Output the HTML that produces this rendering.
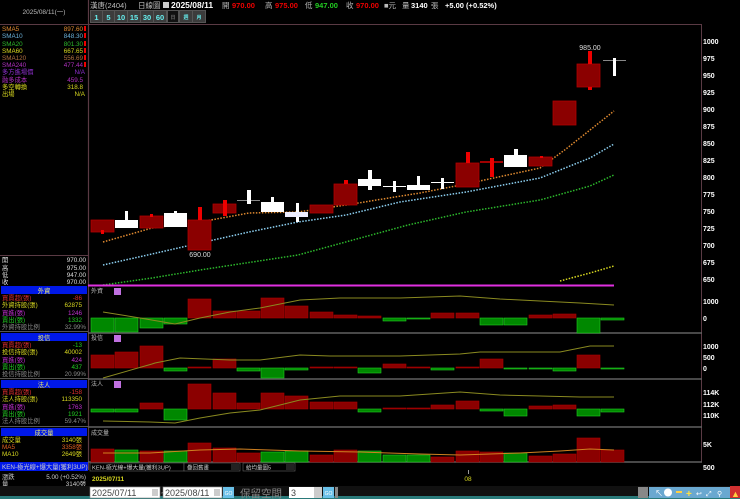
<!DOCTYPE html>
<html><head><meta charset="utf-8"><style>
body{margin:0;background:#000;width:740px;height:499px;overflow:hidden;font-family:"Liberation Sans","Noto Sans CJK TC",sans-serif}
svg{display:block}
text{font-family:"Liberation Sans","Noto Sans CJK TC",sans-serif}
</style></head><body>
<svg width="740" height="499" viewBox="0 0 740 499" xmlns="http://www.w3.org/2000/svg">
<rect width="740" height="499" fill="#000"/>
<g font-size="7.5">
<text x="90" y="8" fill="#bbb">漢唐(2404)</text>
<text x="138" y="8" fill="#bbb">日線圖</text>
<rect x="163" y="2" width="6" height="6" fill="#ccc"/>
<text x="171" y="8" fill="#fff" font-weight="bold" font-size="8.5">2025/08/11</text>
<text x="222" y="8" fill="#bbb">開</text><text x="232" y="8" fill="#e00" font-weight="bold">970.00</text>
<text x="265" y="8" fill="#bbb">高</text><text x="275" y="8" fill="#e00" font-weight="bold">975.00</text>
<text x="305" y="8" fill="#bbb">低</text><text x="315" y="8" fill="#2c2" font-weight="bold">947.00</text>
<text x="346" y="8" fill="#bbb">收</text><text x="356" y="8" fill="#e00" font-weight="bold">970.00</text>
<text x="384" y="8" fill="#bbb">■元</text>
<text x="402" y="8" fill="#bbb">量</text><text x="411" y="8" fill="#fff" font-weight="bold">3140</text><text x="431" y="8" fill="#bbb">張</text>
<text x="445" y="8" fill="#fff" font-weight="bold">+5.00 (+0.52%)</text>
</g>
<rect x="90" y="10" width="116" height="13" fill="#555"/>
<g font-size="7.5" fill="#6ee" text-anchor="middle" font-weight="bold">
<rect x="91" y="11" width="11" height="11" fill="#3c3c3c"/><text x="96.5" y="20">1</text>
<rect x="103" y="11" width="11" height="11" fill="#3c3c3c"/><text x="108.5" y="20">5</text>
<rect x="115" y="11" width="12" height="11" fill="#3c3c3c"/><text x="121" y="20">10</text>
<rect x="128" y="11" width="12" height="11" fill="#3c3c3c"/><text x="134" y="20">15</text>
<rect x="141" y="11" width="12" height="11" fill="#3c3c3c"/><text x="147" y="20">30</text>
<rect x="154" y="11" width="12" height="11" fill="#3c3c3c"/><text x="160" y="20">60</text>
<rect x="168" y="11" width="10" height="11" fill="#111"/><text x="173" y="19" font-size="5" fill="#666">日</text>
<rect x="180" y="11" width="12" height="11" fill="#3c3c3c"/><text x="186" y="19" font-size="5">週</text>
<rect x="193" y="11" width="12" height="11" fill="#3c3c3c"/><text x="199" y="19" font-size="5">月</text>
</g>
<text x="44" y="14" fill="#bbb" font-size="6.5" text-anchor="middle">2025/08/11(一)</text>
<line x1="0" y1="24.5" x2="701" y2="24.5" stroke="#5a3a44" stroke-width="1"/>
<line x1="88.5" y1="0" x2="88.5" y2="470" stroke="#5a3a44" stroke-width="1.2"/>
<line x1="701.5" y1="24" x2="701.5" y2="462" stroke="#5a3a44" stroke-width="1"/>
<g font-size="6.3">
<text x="2" y="31" fill="#e08a30">SMA5</text><text x="83" y="31" fill="#e08a30" text-anchor="end">897.60</text>
<text x="2" y="38" fill="#6ab0d8">SMA10</text><text x="83" y="38" fill="#6ab0d8" text-anchor="end">848.30</text>
<text x="2" y="46" fill="#2cb82c">SMA20</text><text x="83" y="46" fill="#2cb82c" text-anchor="end">801.30</text>
<text x="2" y="53" fill="#d8d820">SMA60</text><text x="83" y="53" fill="#d8d820" text-anchor="end">667.65</text>
<text x="2" y="60" fill="#b07040">SMA120</text><text x="83" y="60" fill="#b07040" text-anchor="end">556.69</text>
<text x="2" y="67" fill="#b030c0">SMA240</text><text x="83" y="67" fill="#b030c0" text-anchor="end">477.44</text>
<text x="2" y="74" fill="#9030d0">多方進場價</text><text x="85" y="74" fill="#9030d0" text-anchor="end">N/A</text>
<text x="2" y="82" fill="#b030c0">融多成本</text><text x="83" y="82" fill="#b030c0" text-anchor="end">459.5</text>
<text x="2" y="89" fill="#d8d820">多空轉換</text><text x="83" y="89" fill="#d8d820" text-anchor="end">318.8</text>
<text x="2" y="96" fill="#d8d820">出場</text><text x="85" y="96" fill="#d8d820" text-anchor="end">N/A</text>
</g>
<g fill="#e00"><rect x="84" y="26" width="2" height="5"/><rect x="84" y="33" width="2" height="5"/><rect x="84" y="41" width="2" height="5"/><rect x="84" y="48" width="2" height="5"/><rect x="84" y="55" width="2" height="5"/><rect x="84" y="62" width="2" height="5"/></g>
<line x1="0" y1="255.5" x2="88" y2="255.5" stroke="#5a3a44"/>
<g font-size="6.3" fill="#ddd">
<text x="2" y="262">開</text><text x="86" y="262" text-anchor="end">970.00</text>
<text x="2" y="270">高</text><text x="86" y="270" text-anchor="end">975.00</text>
<text x="2" y="277">低</text><text x="86" y="277" text-anchor="end">947.00</text>
<text x="2" y="284">收</text><text x="86" y="284" text-anchor="end">970.00</text>
</g>
<g font-size="6.3">
<rect x="1" y="286" width="86" height="8" fill="#0018e8"/><text x="44" y="293" fill="#ee6" text-anchor="middle">外資</text>
<text x="2" y="300" fill="#e03030">買賣超(張)</text><text x="82" y="300" fill="#e03030" text-anchor="end">-86</text>
<text x="2" y="307" fill="#d8d820">外資持股(張)</text><text x="82" y="307" fill="#d8d820" text-anchor="end">62875</text>
<text x="2" y="315" fill="#c030d0">買進(張)</text><text x="82" y="315" fill="#c030d0" text-anchor="end">1246</text>
<text x="2" y="322" fill="#2c2">賣出(張)</text><text x="82" y="322" fill="#2c2" text-anchor="end">1332</text>
<text x="2" y="329" fill="#888">外資持股比例</text><text x="86" y="329" fill="#888" text-anchor="end">32.99%</text>
<line x1="0" y1="331.5" x2="88" y2="331.5" stroke="#555"/>
<rect x="1" y="333" width="86" height="8" fill="#0018e8"/><text x="44" y="340" fill="#ee6" text-anchor="middle">投信</text>
<text x="2" y="347" fill="#e03030">買賣超(張)</text><text x="82" y="347" fill="#2c2" text-anchor="end">-13</text>
<text x="2" y="354" fill="#d8d820">投信持股(張)</text><text x="82" y="354" fill="#d8d820" text-anchor="end">40002</text>
<text x="2" y="362" fill="#c030d0">買進(張)</text><text x="82" y="362" fill="#c030d0" text-anchor="end">424</text>
<text x="2" y="369" fill="#2c2">賣出(張)</text><text x="82" y="369" fill="#2c2" text-anchor="end">437</text>
<text x="2" y="376" fill="#888">投信持股比例</text><text x="86" y="376" fill="#888" text-anchor="end">20.99%</text>
<line x1="0" y1="378.5" x2="88" y2="378.5" stroke="#555"/>
<rect x="1" y="380" width="86" height="8" fill="#0018e8"/><text x="44" y="387" fill="#ee6" text-anchor="middle">法人</text>
<text x="2" y="394" fill="#e03030">買賣超(張)</text><text x="82" y="394" fill="#e03030" text-anchor="end">-158</text>
<text x="2" y="401" fill="#d8d820">法人持股(張)</text><text x="82" y="401" fill="#d8d820" text-anchor="end">113350</text>
<text x="2" y="409" fill="#c030d0">買進(張)</text><text x="82" y="409" fill="#c030d0" text-anchor="end">1763</text>
<text x="2" y="416" fill="#2c2">賣出(張)</text><text x="82" y="416" fill="#2c2" text-anchor="end">1921</text>
<text x="2" y="423" fill="#888">法人持股比例</text><text x="86" y="423" fill="#888" text-anchor="end">59.47%</text>
<line x1="0" y1="426.5" x2="88" y2="426.5" stroke="#555"/>
<rect x="1" y="428" width="86" height="8" fill="#0018e8"/><text x="44" y="435" fill="#ee6" text-anchor="middle">成交量</text>
<text x="2" y="442" fill="#d8d820">成交量</text><text x="82" y="442" fill="#d8d820" text-anchor="end">3140張</text>
<text x="2" y="449" fill="#e06020">MA5</text><text x="82" y="449" fill="#e06020" text-anchor="end">3358張</text>
<text x="2" y="456" fill="#d8d820">MA10</text><text x="82" y="456" fill="#d8d820" text-anchor="end">2649張</text>
<rect x="0" y="462" width="88" height="9" fill="#0018e8"/><text x="2" y="469" fill="#ccc">KEN-極光線+爆大量(獲利3UP)</text>
<text x="2" y="479" fill="#ccc">漲跌</text><text x="86" y="479" fill="#ccc" text-anchor="end">5.00 (+0.52%)</text>
<text x="2" y="486" fill="#ccc">量</text><text x="86" y="486" fill="#ccc" text-anchor="end">3140張</text>
</g>
<g font-size="7" fill="#fff" font-weight="bold">
<text x="703" y="44">1000</text><text x="703" y="61">975</text><text x="703" y="78">950</text><text x="703" y="95">925</text><text x="703" y="112">900</text><text x="703" y="129">875</text><text x="703" y="146">850</text><text x="703" y="163">825</text><text x="703" y="180">800</text><text x="703" y="197">775</text><text x="703" y="214">750</text><text x="703" y="231">725</text><text x="703" y="248">700</text><text x="703" y="265">675</text><text x="703" y="282">650</text>
<text x="703" y="304">1000</text><text x="703" y="321">0</text>
<text x="703" y="349">1000</text><text x="703" y="360">500</text><text x="703" y="371">0</text>
<text x="703" y="395">114K</text><text x="703" y="407">112K</text><text x="703" y="418">110K</text>
<text x="703" y="447">5K</text><text x="703" y="470">500</text>
</g>
<g fill="none" stroke-width="1.5" stroke-dasharray="1.5 1.5">
<polyline stroke="#e08a30" points="103,242 152,228 200,222 249,213 298,212 346,205 395,197 420,193 466,184 540,168 566,149 590,130 614,111"/>
<polyline stroke="#8ccff0" points="103,265 152,254 200,243 249,232 298,222 346,215 400,202 466,192 540,178 590,158 614,144"/>
<polyline stroke="#2cb82c" points="103,285 152,278 200,270 298,255 408,225 466,212 540,200 590,186 614,175"/>
<polyline stroke="#d8d820" points="560,281 590,273 614,266"/>
</g>
<line x1="88" y1="285.5" x2="614" y2="285.5" stroke="#e030e0" stroke-width="2"/>
<g>
<rect x="91" y="220" width="23" height="12" fill="#8b0000" stroke="#b00000" stroke-width=".8"/><rect x="101" y="230" width="3" height="4" fill="#e00"/>
<rect x="125" y="211" width="3" height="10" fill="#fff"/><rect x="115" y="220" width="23" height="8" fill="#fff"/>
<rect x="140" y="216" width="23" height="12" fill="#8b0000" stroke="#b00000" stroke-width=".8"/><rect x="150" y="214" width="3" height="3" fill="#e00"/>
<rect x="174" y="211" width="3" height="3" fill="#fff"/><rect x="164" y="213" width="23" height="14" fill="#fff"/>
<rect x="188" y="220" width="23" height="30" fill="#8b0000" stroke="#b00000" stroke-width=".8"/><rect x="198" y="207" width="4" height="13" fill="#e00"/>
<rect x="213" y="204" width="23" height="9" fill="#8b0000" stroke="#b00000" stroke-width=".8"/><rect x="223" y="200" width="4" height="16" fill="#e00"/>
<line x1="237" y1="200.5" x2="260" y2="200.5" stroke="#888"/><rect x="247" y="190" width="4" height="14" fill="#fff"/>
<rect x="271" y="197" width="3" height="5" fill="#fff"/><rect x="261" y="202" width="23" height="10" fill="#fff"/>
<rect x="296" y="203" width="3" height="19" fill="#fff"/><rect x="285" y="212" width="23" height="5" fill="#eef"/>
<rect x="310" y="205" width="23" height="8" fill="#8b0000" stroke="#b00000" stroke-width=".8"/>
<rect x="334" y="184" width="23" height="21" fill="#8b0000" stroke="#b00000" stroke-width=".8"/><rect x="344" y="180" width="4" height="4" fill="#e00"/>
<rect x="368" y="170" width="4" height="20" fill="#fff"/><rect x="358" y="179" width="23" height="7" fill="#fff"/>
<line x1="383" y1="186.5" x2="406" y2="186.5" stroke="#fff"/><rect x="393" y="181" width="3" height="11" fill="#fff"/>
<rect x="417" y="176" width="3" height="9" fill="#fff"/><rect x="407" y="185" width="23" height="5" fill="#fff"/>
<line x1="431" y1="182.5" x2="454" y2="182.5" stroke="#fff"/><rect x="441" y="178" width="3" height="11" fill="#fff"/>
<rect x="456" y="163" width="23" height="24" fill="#8b0000" stroke="#b00000" stroke-width=".8"/><rect x="466" y="152" width="4" height="11" fill="#e00"/>
<rect x="480" y="161" width="23" height="2" fill="#a00000"/><rect x="490" y="158" width="4" height="19" fill="#e00"/>
<rect x="514" y="149" width="4" height="6" fill="#fff"/><rect x="504" y="155" width="23" height="12" fill="#fff"/>
<rect x="529" y="157" width="23" height="9" fill="#8b0000" stroke="#b00000" stroke-width=".8"/><rect x="540" y="156" width="3" height="2" fill="#e00"/>
<rect x="553" y="101" width="23" height="24" fill="#8b0000" stroke="#b00000" stroke-width=".8"/>
<rect x="577" y="64" width="23" height="23" fill="#8b0000" stroke="#b00000" stroke-width=".8"/><rect x="588" y="51" width="4" height="13" fill="#e00"/><rect x="588" y="87" width="4" height="3" fill="#e00"/>
<line x1="603" y1="60.5" x2="626" y2="60.5" stroke="#888"/><rect x="613" y="58" width="3" height="18" fill="#fff"/>
<text x="590" y="50" fill="#ddd" font-size="7" text-anchor="middle">985.00</text>
<text x="200" y="257" fill="#ddd" font-size="7" text-anchor="middle">690.00</text>
</g>
<g stroke="#606060" stroke-width="1.5">
<line x1="88" y1="333" x2="702" y2="333"/><line x1="88" y1="379" x2="702" y2="379"/><line x1="88" y1="427" x2="702" y2="427"/><line x1="88" y1="462" x2="702" y2="462"/>
</g>
<g font-size="6" fill="#bbb"><text x="91" y="293">外資</text><text x="91" y="340">投信</text><text x="91" y="386">法人</text><text x="91" y="435">成交量</text></g>
<g fill="#c070e0"><rect x="114" y="288" width="7" height="7"/><rect x="114" y="335" width="7" height="7"/><rect x="114" y="381" width="7" height="7"/></g>
<g stroke-width=".6">
<g fill="#008800" stroke="#2c2"><rect x="91" y="318" width="23" height="14"/><rect x="115" y="318" width="23" height="14"/><rect x="140" y="318" width="23" height="10"/><rect x="164" y="318" width="23" height="6"/><rect x="383" y="318" width="23" height="3"/><rect x="407" y="318" width="23" height="1"/><rect x="480" y="318" width="23" height="7"/><rect x="504" y="318" width="23" height="7"/><rect x="577" y="318" width="23" height="15"/><rect x="601" y="318" width="23" height="2"/></g>
<g fill="#8b0000" stroke="#a00"><rect x="188" y="299" width="23" height="19"/><rect x="213" y="311" width="23" height="7"/><rect x="237" y="311" width="23" height="7"/><rect x="261" y="298" width="23" height="20"/><rect x="285" y="306" width="23" height="12"/><rect x="310" y="312" width="23" height="6"/><rect x="334" y="315" width="23" height="3"/><rect x="358" y="316" width="23" height="2"/><rect x="431" y="313" width="23" height="5"/><rect x="456" y="313" width="23" height="5"/><rect x="529" y="315" width="23" height="3"/><rect x="553" y="314" width="23" height="4"/></g>
</g>
<polyline fill="none" stroke="#8a8a20" points="103,312 140,318 175,324 200,318 230,312 260,308 300,300 340,298 400,298 460,296 500,299 540,301 580,303 614,305"/>
<g stroke-width=".6">
<g fill="#8b0000" stroke="#a00"><rect x="91" y="355" width="23" height="13"/><rect x="115" y="352" width="23" height="16"/><rect x="140" y="346" width="23" height="22"/><rect x="188" y="367" width="23" height="1"/><rect x="213" y="359" width="23" height="9"/><rect x="310" y="367" width="23" height="1"/><rect x="334" y="367" width="23" height="1"/><rect x="383" y="364" width="23" height="4"/><rect x="407" y="367" width="23" height="1"/><rect x="456" y="367" width="23" height="1"/><rect x="480" y="359" width="23" height="9"/><rect x="577" y="355" width="23" height="13"/></g>
<g fill="#008800" stroke="#2c2"><rect x="164" y="368" width="23" height="3"/><rect x="237" y="368" width="23" height="3"/><rect x="261" y="368" width="23" height="10"/><rect x="285" y="368" width="23" height="2"/><rect x="358" y="368" width="23" height="5"/><rect x="431" y="368" width="23" height="2"/><rect x="504" y="368" width="23" height="1"/><rect x="529" y="368" width="23" height="1"/><rect x="553" y="368" width="23" height="3"/><rect x="601" y="368" width="23" height="1"/></g>
</g>
<polyline fill="none" stroke="#8a8a20" points="103,378 152,364 155,363 180,358 230,360 260,360 300,355 330,356 400,356 460,354 480,352 520,352 560,352 590,346 614,346"/>
<g stroke-width=".6">
<g fill="#008800" stroke="#2c2"><rect x="91" y="409" width="23" height="3"/><rect x="115" y="409" width="23" height="3"/><rect x="164" y="409" width="23" height="11"/><rect x="358" y="409" width="23" height="3"/><rect x="480" y="409" width="23" height="2"/><rect x="504" y="409" width="23" height="7"/><rect x="577" y="409" width="23" height="7"/><rect x="601" y="409" width="23" height="3"/></g>
<g fill="#8b0000" stroke="#a00"><rect x="140" y="403" width="23" height="6"/><rect x="188" y="384" width="23" height="25"/><rect x="213" y="393" width="23" height="16"/><rect x="237" y="403" width="23" height="6"/><rect x="261" y="393" width="23" height="16"/><rect x="285" y="396" width="23" height="13"/><rect x="310" y="402" width="23" height="7"/><rect x="334" y="402" width="23" height="7"/><rect x="383" y="408" width="23" height="1"/><rect x="407" y="408" width="23" height="1"/><rect x="431" y="405" width="23" height="4"/><rect x="456" y="401" width="23" height="8"/><rect x="529" y="406" width="23" height="3"/><rect x="553" y="405" width="23" height="4"/></g>
</g>
<polyline fill="none" stroke="#8a8a20" points="103,421 150,422 175,423 200,418 230,413 260,410 300,400 340,396 400,396 460,392 500,395 540,396 580,397 614,397"/>
<g stroke-width=".6">
<g fill="#8b0000" stroke="#a00"><rect x="91" y="449" width="23" height="13"/><rect x="140" y="451" width="23" height="11"/><rect x="188" y="443" width="23" height="19"/><rect x="213" y="448" width="23" height="14"/><rect x="237" y="453" width="23" height="9"/><rect x="310" y="455" width="23" height="7"/><rect x="334" y="450" width="23" height="12"/><rect x="431" y="457" width="23" height="5"/><rect x="456" y="451" width="23" height="11"/><rect x="480" y="452" width="23" height="10"/><rect x="529" y="456" width="23" height="6"/><rect x="553" y="454" width="23" height="8"/><rect x="577" y="438" width="23" height="24"/><rect x="601" y="450" width="23" height="12"/></g>
<g fill="#008800" stroke="#2c2"><rect x="115" y="450" width="23" height="12"/><rect x="164" y="451" width="23" height="11"/><rect x="261" y="452" width="23" height="10"/><rect x="285" y="451" width="23" height="11"/><rect x="358" y="451" width="23" height="11"/><rect x="383" y="455" width="23" height="7"/><rect x="407" y="455" width="23" height="7"/><rect x="504" y="453" width="23" height="9"/></g>
</g>
<polyline fill="none" stroke="#d08020" points="103,453 150,453 200,450 240,449 300,451 360,452 420,454 460,455 520,453 560,451 590,449 614,450"/>
<rect x="90" y="463" width="94" height="8" fill="#000" stroke="#666" stroke-width=".6"/><text x="92" y="469.5" fill="#ccc" font-size="5.8">KEN-極光線+爆大量(獲利3UP)</text>
<rect x="184" y="463" width="56" height="8" fill="#000" stroke="#666" stroke-width=".6"/><text x="187" y="469.5" fill="#ccc" font-size="5.5">疊回舊畫</text><rect x="231" y="464" width="8" height="6" fill="#222"/>
<rect x="243" y="463" width="52" height="8" fill="#000" stroke="#666" stroke-width=".6"/><text x="246" y="469.5" fill="#ccc" font-size="5.5">給均量圖5</text><rect x="286" y="464" width="8" height="6" fill="#222"/>
<text x="92" y="481" fill="#d8d820" font-size="6.5" font-weight="bold">2025/07/11</text>
<line x1="468.5" y1="470" x2="468.5" y2="474" stroke="#999"/><text x="468" y="481" fill="#d8d820" font-size="6.5" text-anchor="middle">08</text>
<rect x="0" y="486" width="740" height="13" fill="#111"/>
<rect x="0" y="496" width="740" height="3" fill="#2a7a7a"/>
<rect x="90" y="487" width="70" height="11" fill="#fff" stroke="#888" stroke-width=".6"/><text x="92" y="496" fill="#444" font-size="9">2025/07/11</text><rect x="152" y="489" width="6" height="7" fill="#ccc"/>
<text x="161" y="496" fill="#ccc" font-size="8">~</text>
<rect x="163" y="487" width="59" height="11" fill="#fff" stroke="#888" stroke-width=".6"/><text x="165" y="496" fill="#444" font-size="9">2025/08/11</text><rect x="214" y="489" width="6" height="7" fill="#ccc"/>
<rect x="223" y="487" width="11" height="11" fill="#6ac0e8"/><text x="228.5" y="495" fill="#fff" font-size="5" text-anchor="middle">GO</text>
<text x="240" y="497" fill="#888" font-size="10.5" font-family="Liberation Serif, Noto Serif CJK SC, serif">保留空間</text>
<rect x="289" y="487" width="25" height="11" fill="#fff"/><text x="291" y="496" fill="#444" font-size="9">3</text><rect x="314" y="487" width="8" height="11" fill="#ccc"/>
<rect x="323" y="487" width="11" height="11" fill="#6ac0e8"/><text x="328.5" y="495" fill="#fff" font-size="5" text-anchor="middle">GO</text>
<rect x="335" y="487" width="3" height="11" fill="#888"/>
<rect x="638" y="487" width="10" height="11" fill="#888"/>
<g><rect x="649" y="487" width="81" height="11" fill="#6aa8d0"/><rect x="730" y="486" width="10" height="12" fill="#d03030"/>
<text x="655" y="496" fill="#fff" font-size="8">↖</text><circle cx="668" cy="492.5" r="4" fill="#fff"/><rect x="676" y="491" width="6" height="2" fill="#ffd040"/><text x="686" y="497" fill="#ffe040" font-size="10" font-weight="bold">+</text><text x="696" y="496" fill="#fff" font-size="7">↩</text><text x="706" y="496" fill="#fff" font-size="7">⤢</text><text x="717" y="496" fill="#fff" font-size="7">⚲</text><text x="731" y="497" fill="#ffd040" font-size="9">▲</text></g>
</svg>
</body></html>
